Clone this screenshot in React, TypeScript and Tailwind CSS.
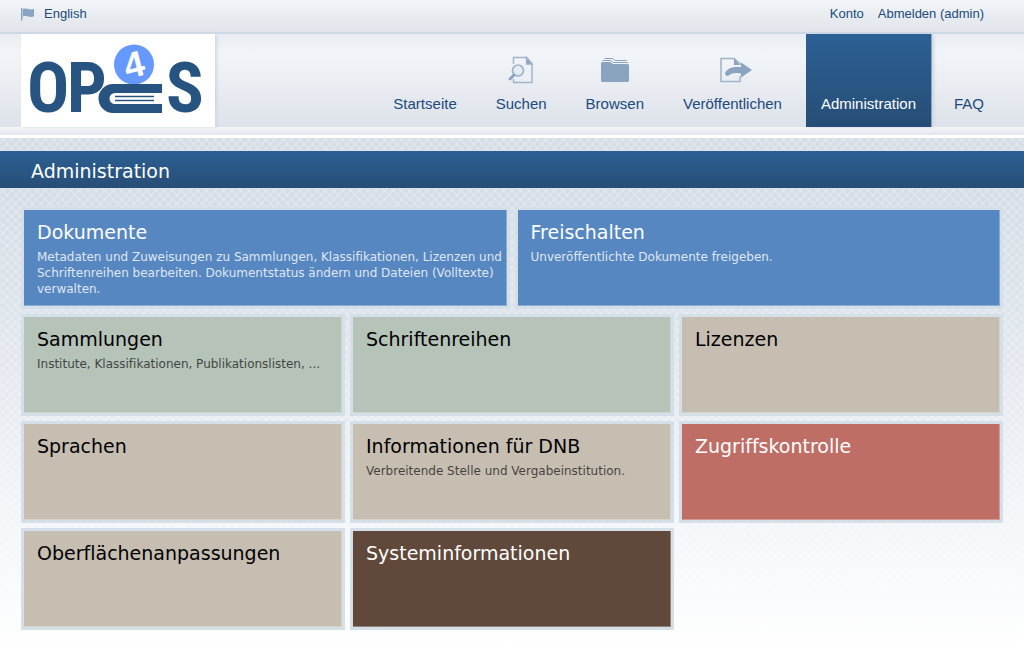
import type { ReactNode } from "react";

type Tile = { title: string; text?: string; wide?: boolean; tone: string };

const tiles: Tile[] = [
  {
    title: "Dokumente",
    text: "Metadaten und Zuweisungen zu Sammlungen, Klassifikationen, Lizenzen und Schriftenreihen bearbeiten. Dokumentstatus ändern und Dateien (Volltexte) verwalten.",
    wide: true,
    tone: "bg-[#5687c1] text-white",
  },
  { title: "Freischalten", text: "Unveröffentlichte Dokumente freigeben.", wide: true, tone: "bg-[#5687c1] text-white" },
  { title: "Sammlungen", text: "Institute, Klassifikationen, Publikationslisten, ...", tone: "bg-[#b5c3b8] text-black" },
  { title: "Schriftenreihen", tone: "bg-[#b5c3b8] text-black" },
  { title: "Lizenzen", tone: "bg-[#c6beb1] text-black" },
  { title: "Sprachen", tone: "bg-[#c6beb1] text-black" },
  { title: "Informationen für DNB", text: "Verbreitende Stelle und Vergabeinstitution.", tone: "bg-[#c6beb1] text-black" },
  { title: "Zugriffskontrolle", tone: "bg-[#bf6e66] text-white" },
  { title: "Oberflächenanpassungen", tone: "bg-[#c6beb1] text-black" },
  { title: "Systeminformationen", tone: "bg-[#60483a] text-white" },
];

function Logo() {
  return (
    <svg viewBox="0 0 194 93" className="h-[93px] w-[194px] overflow-visible" role="img" aria-label="OPUS 4">
      <g fill="#265380" fontFamily="'Liberation Sans Narrow', 'Roboto Condensed', 'Liberation Sans', sans-serif" fontWeight="700" fontSize="70">
        <text x="27" y="78" textAnchor="middle">O</text>
        <text x="66" y="78" textAnchor="middle">P</text>
        <text x="164" y="78" textAnchor="middle">S</text>
      </g>
      <circle cx="113" cy="30.500" r="20" fill="#6699ff" />
      <text x="113" y="43" textAnchor="middle" fill="#fff" fontFamily="'Liberation Sans Narrow', 'Liberation Sans', sans-serif" fontWeight="700" fontSize="36" transform="rotate(-14 113 31)">4</text>
      <path d="M141 50H92a14.500 14.500 0 0 0 0 29h49v-9H94a5.500 5.500 0 0 1 0-11h47z" fill="#265380" />
      <path d="M94 62.500h39M94 66.500h39" stroke="#265380" strokeWidth="1.500" />
    </svg>
  );
}

function SearchIcon() {
  return (
    <svg viewBox="0 0 26 28" className="h-7 w-[26px]" fill="none" stroke="#9fb3c9" strokeWidth="1.400" aria-hidden="true">
      <path d="M5.500 8V1.500h13l5.500 6V26.500H5.500V23" />
      <path d="M18.500 1.500v6.500H24z" fill="#8aa3be" />
      <circle cx="10" cy="14.500" r="5.500" fill="#e6ebf1" strokeWidth="1.700" />
      <path d="M6 19l-4 4" strokeWidth="2.800" strokeLinecap="round" stroke="#8aa3be" />
    </svg>
  );
}

function FolderIcon() {
  return (
    <svg viewBox="0 0 30 26" className="h-[26px] w-[30px]" fill="#8aa3be" aria-hidden="true">
      <path d="M1 6.500Q1 5 2.500 5H10l3 2h14.500Q29 7 29 8.500V23.500Q29 25 27.500 25h-25Q1 25 1 23.500z" />
      <path d="M2.500 3.500h8l3 2H28M4.500 1.500h8l3 2H26.500" fill="none" stroke="#8aa3be" strokeWidth="1" />
    </svg>
  );
}

function PublishIcon() {
  return (
    <svg viewBox="0 0 34 26" className="h-[26px] w-[34px]" aria-hidden="true">
      <path d="M21 19v5.500H2V1.500h13l6 5V8" fill="none" stroke="#9fb3c9" strokeWidth="1.500" />
      <path d="M15 1.500V8h6z" fill="#8aa3be" />
      <path d="M22 5.500L33 13L22 20.500V16.500C15 15.500 12 16.500 9 19Q6 19 6 16C9 10.500 14 9.500 22 10z" fill="#8aa3be" />
    </svg>
  );
}

function NavItem({ label, icon, place, active }: { label: string; icon?: ReactNode; place: string; active?: boolean }) {
  return (
    <a
      href="#"
      aria-current={active ? "page" : undefined}
      className={`flex h-[93px] flex-col items-center justify-between pt-[21px] pb-[14px] text-[15px] leading-[18px] ${place} ${
        active
          ? "border-r border-[#8ba6c2] bg-linear-to-b from-[#2c6094] to-[#264e76] text-white shadow-[2px_0_3px_#cdd7e2]"
          : "text-[#204a7b]"
      }`}
    >
      <span className="flex h-[30px] items-center">{icon}</span>
      {label}
    </a>
  );
}

export default function App() {
  return (
    <div className="min-h-screen bg-[repeating-linear-gradient(45deg,#ffffff30_0_2px,transparent_2px_6px),repeating-linear-gradient(-45deg,#ffffff30_0_2px,transparent_2px_6px),linear-gradient(#d5dde6_138px,#d5dde6_200px,#dfe5ec_330px,#f3f5f9_520px,#fff_650px)] font-['Liberation_Sans',Arial,sans-serif]">
      <header>
        <div className="flex h-[34px] items-center justify-between border-b-2 border-[#ccd8e4] bg-linear-to-b from-[#f2f5f8] to-[#e0e5eb] pr-10 pb-1 pl-[21px] text-[13px] text-[#204a7b]">
          <a href="#" className="flex items-center gap-[9px]">
            <svg viewBox="0 0 14 14" className="size-3.5" fill="#8aa3be" aria-hidden="true">
              <path d="M0 1h1.500v12.500H0zM2 2c4-1.500 6 1.500 11 0v7.500c-5 1.500-7-1.500-11 0z" />
            </svg>
            English
          </a>
          <nav aria-label="Konto" className="flex gap-[14px]">
            <a href="#">Konto</a>
            <a href="#">Abmelden (admin)</a>
          </nav>
        </div>
        <div className="flex justify-between bg-[linear-gradient(#e9edf2,#f2f5f8_20px,#dde2ea)] pl-[21px]">
          <a href="#" className="bg-white shadow-[2px_0_3px_#cdd7e2]">
            <Logo />
          </a>
          <nav aria-label="Hauptmenü" className="flex">
            <NavItem label="Startseite" place="mr-[39px]" />
            <NavItem label="Suchen" icon={<SearchIcon />} place="mr-[39px]" />
            <NavItem label="Browsen" icon={<FolderIcon />} place="mr-[39px]" />
            <NavItem label="Veröffentlichen" icon={<span className="pl-2"><PublishIcon /></span>} place="mr-6" />
            <NavItem label="Administration" place="px-[15px]" active />
            <NavItem label="FAQ" place="pr-10 pl-[22px]" />
          </nav>
        </div>
        <div className="h-[11px] border-b-3 border-white bg-linear-to-b from-[#f5f7fa] to-[#e2e7ee]" />
      </header>
      <main className="pt-[13px] font-['DejaVu_Sans',Verdana,sans-serif] [font-variant-ligatures:none]">
        <h1 className="bg-linear-to-b from-[#2c6094] to-[#264e76] px-[31px] pt-2 pb-[5px] text-[19px] leading-6 text-white">
          Administration
        </h1>
        <ul className="grid grid-cols-6 gap-[5px] px-[21px] pt-[19px] pb-6">
          {tiles.map((tile) => (
            <li key={tile.title} className={tile.wide ? "col-span-3" : "col-span-2"}>
              <a
                href="#"
                className={`block min-h-[102px] border-3 border-[#d5dfe8] pt-[9px] pb-[6px] pl-[13px] shadow-[inset_-1px_-1px_0_#ffffff50] ${tile.tone}`}
              >
                <h2 className="text-[19px] leading-[26px]">{tile.title}</h2>
                {tile.text && (
                  <p className={`pt-1 text-[12px] leading-4 ${tile.wide ? "opacity-80" : "opacity-65"}`}>{tile.text}</p>
                )}
              </a>
            </li>
          ))}
        </ul>
      </main>
    </div>
  );
}
